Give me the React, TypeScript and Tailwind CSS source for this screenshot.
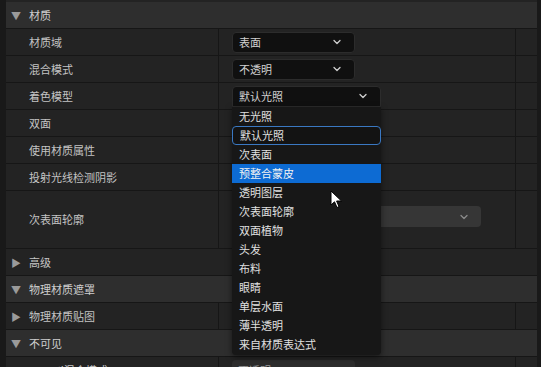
import { ChevronDown } from "lucide-react";

const FONT = { fontFamily: '"Noto Sans CJK SC", "Noto Sans", sans-serif' };

const OPTIONS = [
  "无光照",
  "默认光照",
  "次表面",
  "预整合蒙皮",
  "透明图层",
  "次表面轮廓",
  "双面植物",
  "头发",
  "布料",
  "眼睛",
  "单层水面",
  "薄半透明",
  "来自材质表达式",
];

function Header({ label, open = true }: { label: string; open?: boolean }) {
  return (
    <div className="flex h-[27px] shrink-0 items-center border-b border-[#161616] bg-[#2e2e2e]">
      <span className="ml-[1px] w-[18px] text-center text-[10px] text-[#9a9a9a]">{open ? "▼" : "▶"}</span>
      <span className="ml-[4px] text-[11px] text-[#cfcfcf]">{label}</span>
    </div>
  );
}

function Group({ label }: { label: string }) {
  return (
    <div className="flex h-[27px] shrink-0 items-center border-b border-[#161616] bg-[#232323]">
      <span className="ml-[1px] w-[18px] text-center text-[10px] text-[#9a9a9a]">▶</span>
      <span className="ml-[4px] text-[11px] text-[#c6c6c6]">{label}</span>
    </div>
  );
}

function Row({
  label,
  children,
  tall = false,
  arrow = false,
}: {
  label: string;
  children?: React.ReactNode;
  tall?: boolean;
  arrow?: boolean;
}) {
  return (
    <div
      className={`flex shrink-0 border-b border-[#161616] bg-[#232323] ${tall ? "h-[58px]" : "h-[27px]"}`}
    >
      <div className="flex w-[213px] items-center border-r border-[#161616]">
        {arrow ? (
          <span className="ml-[1px] w-[18px] text-center text-[10px] text-[#9a9a9a]">▶</span>
        ) : (
          <span className="w-[19px]" />
        )}
        <span className="ml-[4px] text-[11px] text-[#c4c4c4]">{label}</span>
      </div>
      <div className="flex w-[297px] items-center border-r border-[#161616]">{children}</div>
      <div className="flex-1" />
    </div>
  );
}

function Select({ value, width, open = false }: { value: string; width: string; open?: boolean }) {
  return (
    <div
      className={`ml-[13px] flex h-[21px] items-center justify-between border border-[#2c2c2c] bg-[#101010] pl-[6px] pr-[11px] ${width} ${open ? "rounded-t-[4px]" : "rounded-[4px]"}`}
    >
      <span className="text-[11px] text-[#d0d0d0]">{value}</span>
      <ChevronDown size={12} strokeWidth={2.6} color="#cfcfcf" />
    </div>
  );
}

export default function App() {
  return (
    <div className="flex h-[367px] w-[541px] overflow-hidden bg-[#161616]" style={FONT}>
      <div className="w-[6px] shrink-0 bg-[#191919]" />
      <div className="relative flex w-[531px] flex-col">
        <div className="h-[2px] shrink-0 bg-[#232323]" />
        <Header label="材质" />
        <Row label="材质域">
          <Select value="表面" width="w-[123px]" />
        </Row>
        <Row label="混合模式">
          <Select value="不透明" width="w-[123px]" />
        </Row>
        <Row label="着色模型">
          <Select value="默认光照" width="w-[149px]" open />
        </Row>
        <Row label="双面" />
        <Row label="使用材质属性" />
        <Row label="投射光线检测阴影" />
        <Row label="次表面轮廓" tall>
          <div className="mb-[6px] ml-[13px] flex h-[21px] w-[249px] items-center justify-end rounded-[4px] bg-[#363636] pr-[11px]">
            <ChevronDown size={12} strokeWidth={2.6} color="#8a8a8a" />
          </div>
        </Row>
        <Group label="高级" />
        <Header label="物理材质遮罩" />
        <Row label="物理材质贴图" arrow />
        <Header label="不可见" />
        <Row label="Stencil混合模式">
          <div className="ml-[13px] flex h-[21px] w-[123px] items-center rounded-[4px] bg-[#2c2c2c] pl-[6px]">
            <span className="text-[11px] text-[#9a9a9a]">不透明</span>
          </div>
        </Row>

        {/* open dropdown list */}
        <div className="absolute left-[226px] top-[107px] w-[149px] rounded-b-[4px] bg-[#171717] pb-[1px] shadow-[0_2px_6px_rgba(0,0,0,0.5)]">
          {OPTIONS.map((o) => (
            <div
              key={o}
              className={`flex h-[19px] items-center pl-[7px] text-[11px] ${
                o === "预整合蒙皮"
                  ? "bg-[#0d6bd3] text-[#f2f2f2]"
                  : o === "默认光照"
                    ? "rounded-[4px] border border-[#3a78c2] bg-[#131313] pl-[6px] text-[#e0e0e0]"
                    : "text-[#e0e0e0]"
              }`}
            >
              {o}
            </div>
          ))}
        </div>

        {/* mouse pointer */}
        <svg className="absolute left-[324px] top-[190px]" width="13" height="19" viewBox="0 0 13 19">
          <path d="M1 1 L1 15 L4.5 11.8 L7 17.5 L9 16.6 L6.6 11 L11.5 11 Z" fill="#fff" stroke="#000" strokeWidth="1" />
        </svg>
      </div>
      <div className="w-[4px] shrink-0 bg-[#191919]" />
    </div>
  );
}
